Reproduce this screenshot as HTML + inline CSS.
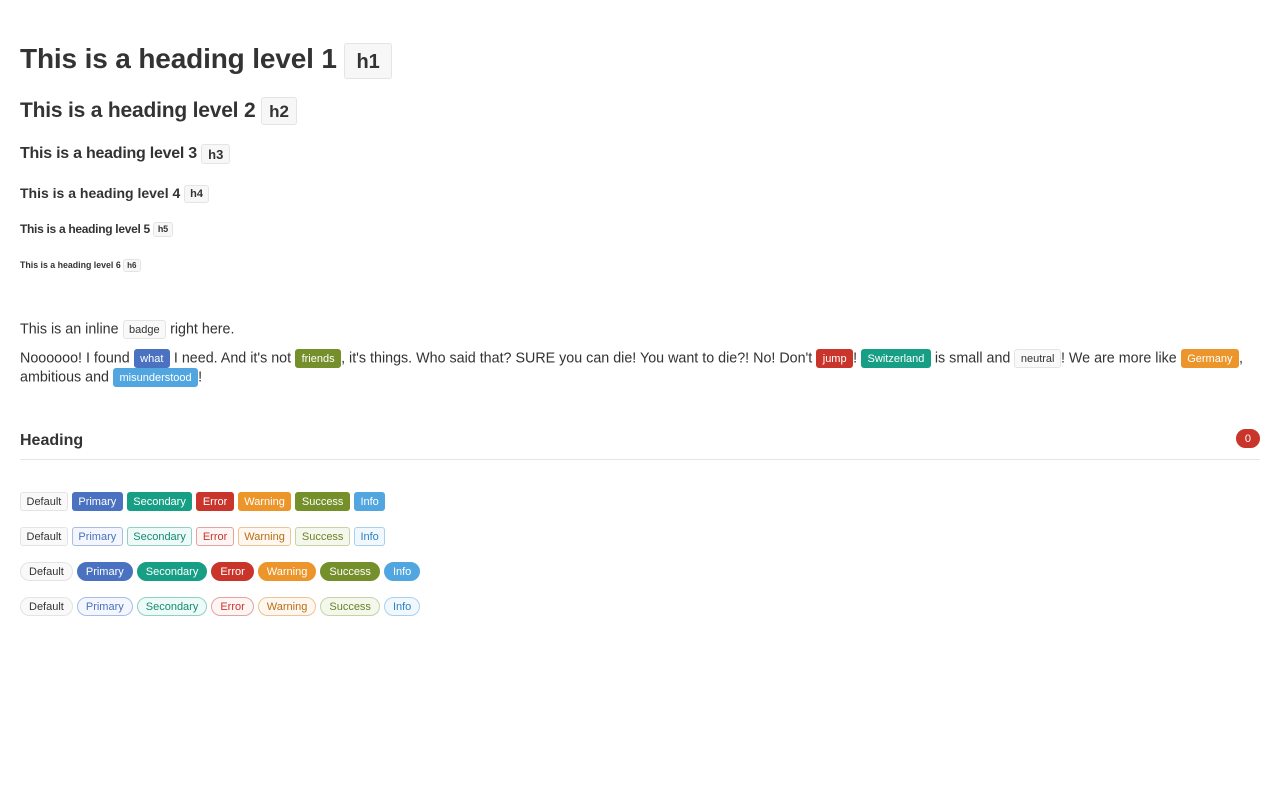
<!DOCTYPE html>
<html><head><meta charset="utf-8"><style>
body{margin:0;background:#fff;color:#333;font-family:"Liberation Sans",sans-serif;font-size:14.3px;}
.h{font-weight:bold;margin:0;position:absolute;left:20px;white-space:nowrap;}
.b{display:inline-block;border:1px solid #e4e4e4;background:#f7f7f7;border-radius:3px;color:#333;vertical-align:middle;line-height:1;}
.s{display:inline-block;font-size:11px;height:19px;line-height:16px;padding:1px 5.5px 0;border:1px solid #e4e4e4;background:#f9f9f9;color:#333;border-radius:3px;box-sizing:border-box;vertical-align:middle;}
.pr{background:#4a72c0;border-color:#4a72c0;color:#fff}
.se{background:#169f85;border-color:#169f85;color:#fff}
.er{background:#c9352a;border-color:#c9352a;color:#fff}
.wa{background:#eb952b;border-color:#eb952b;color:#fff}
.su{background:#758f2a;border-color:#758f2a;color:#fff}
.in{background:#52a6e0;border-color:#52a6e0;color:#fff}
.o.pr{background:#f3f6fc;color:#4a72c0;border-color:#a9bde4}
.o.se{background:#eefaf7;color:#168a73;border-color:#8fd1c4}
.o.er{background:#fdf5f4;color:#c9352a;border-color:#e4a39e}
.o.wa{background:#fdf7ef;color:#b86e15;border-color:#efc395}
.o.su{background:#f4f7ec;color:#6a8226;border-color:#c6d3a5}
.o.in{background:#f1f8fd;color:#2c7fc0;border-color:#a9d1ef}
.p{border-radius:10px;padding:1px 8px 0}
.row{position:absolute;left:20px;white-space:nowrap;font-size:0;}
.row .s{margin-right:4px}
p{margin:0;position:absolute;left:20px;right:20px;line-height:19px;}
</style></head><body>
<div class="h" style="top:40px;font-size:28px;line-height:38px;letter-spacing:-0.15px">This is a heading level 1 <span class="b" style="font-size:20px;padding:8px 11px 6px;letter-spacing:0">h1</span></div>
<div class="h" style="top:96px;font-size:21px;line-height:30px;letter-spacing:-0.2px">This is a heading level 2 <span class="b" style="font-size:17px;padding:5px 7px 4px;letter-spacing:0">h2</span></div>
<div class="h" style="top:143px;font-size:16px;line-height:22px;letter-spacing:-0.25px">This is a heading level 3 <span class="b" style="font-size:13px;padding:3px 6px 2px;letter-spacing:0">h3</span></div>
<div class="h" style="top:183px;font-size:14px;line-height:20px">This is a heading level 4 <span class="b" style="font-size:11px;padding:3px 5px 2px;">h4</span></div>
<div class="h" style="top:221px;font-size:12px;line-height:17px;letter-spacing:-0.3px">This is a heading level 5 <span class="b" style="font-size:9px;padding:2px 4px 2px;">h5</span></div>
<div class="h" style="top:258px;font-size:8.8px;line-height:15px">This is a heading level 6 <span class="b" style="font-size:8px;padding:2px 3px 1px;">h6</span></div>

<p style="top:320px">This is an inline <span class="s">badge</span> right here.</p>
<p style="top:349px">Noooooo! I found <span class="s pr">what</span> I need. And it's not <span class="s su">friends</span>, it's things. Who said that? SURE you can die! You want to die?! No! Don't <span class="s er">jump</span>! <span class="s se">Switzerland</span> is small and <span class="s">neutral</span>! We are more like <span class="s wa">Germany</span>, ambitious and <span class="s in">misunderstood</span>!</p>

<div style="position:absolute;left:20px;right:20px;top:428px;height:31px;border-bottom:1px solid #e6e6e6;">
<span style="font-weight:bold;font-size:16px;position:absolute;top:4px;left:0">Heading</span>
<span class="s er p" style="position:absolute;right:0;top:1px;padding:1px 8px 0">0</span>
</div>

<div class="row" style="top:492px"><span class="s">Default</span><span class="s pr">Primary</span><span class="s se">Secondary</span><span class="s er">Error</span><span class="s wa">Warning</span><span class="s su">Success</span><span class="s in">Info</span></div>
<div class="row" style="top:527px"><span class="s">Default</span><span class="s o pr">Primary</span><span class="s o se">Secondary</span><span class="s o er">Error</span><span class="s o wa">Warning</span><span class="s o su">Success</span><span class="s o in">Info</span></div>
<div class="row" style="top:562px"><span class="s p">Default</span><span class="s p pr">Primary</span><span class="s p se">Secondary</span><span class="s p er">Error</span><span class="s p wa">Warning</span><span class="s p su">Success</span><span class="s p in">Info</span></div>
<div class="row" style="top:597px"><span class="s p">Default</span><span class="s p o pr">Primary</span><span class="s p o se">Secondary</span><span class="s p o er">Error</span><span class="s p o wa">Warning</span><span class="s p o su">Success</span><span class="s p o in">Info</span></div>
</body></html>
